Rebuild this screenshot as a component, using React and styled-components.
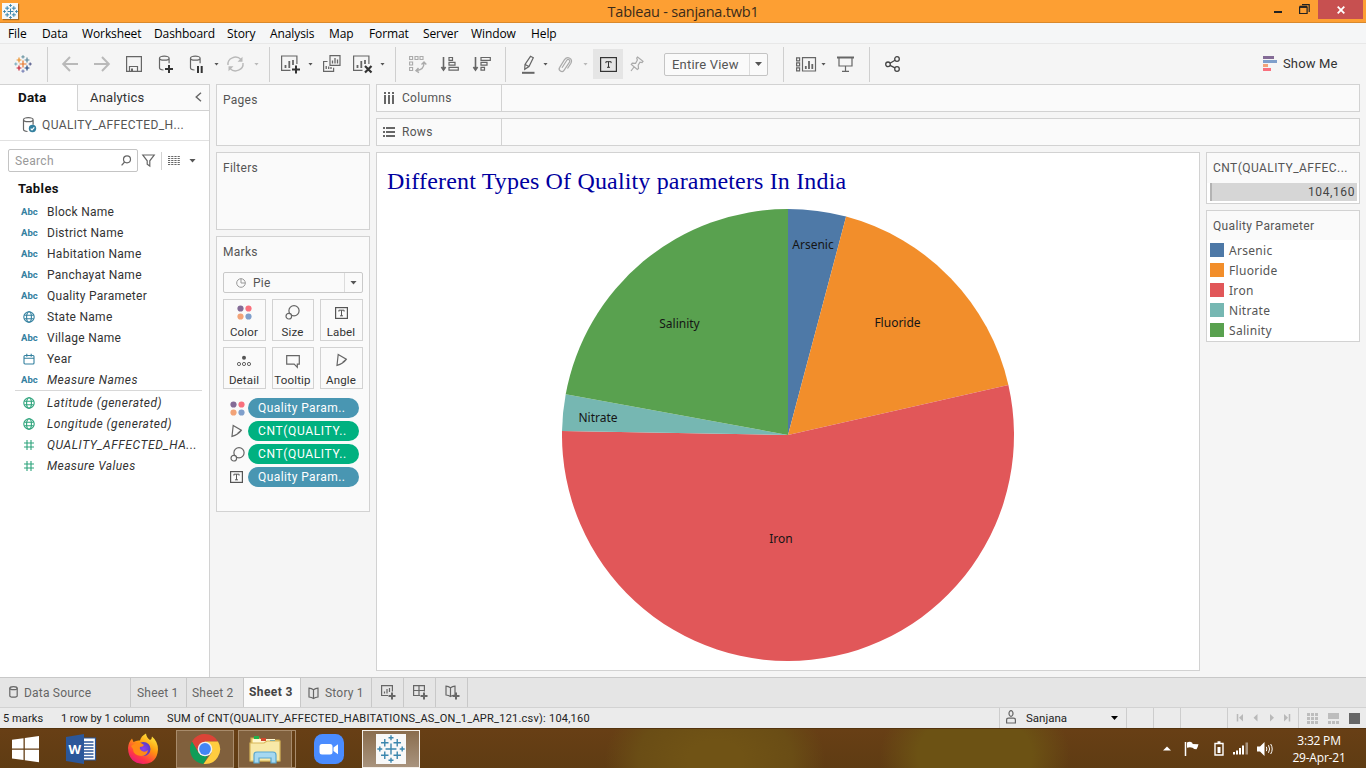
import React from "react";
import styled, { createGlobalStyle, css } from "styled-components";

const GlobalStyle = createGlobalStyle`
  * { box-sizing: border-box; }
  html, body { margin: 0; padding: 0; overflow: hidden; }
  body { font-family: Roboto, "Liberation Sans", sans-serif; font-size: 12px; color: #333; }
`;

const segoe = css`font-family: "Open Sans", "Noto Sans", sans-serif;`;
const LINE = "#d2d2d2";

const Window = styled.div`
  width: 1366px;
  height: 768px;
  display: flex;
  flex-direction: column;
  background: #f5f5f5;
  white-space: nowrap;
`;

const Glyph = styled.svg`
  display: block;
  flex: none;
  margin-left: ${(p) => p.$gap || 0}px;
  margin-top: ${(p) => p.$top || 0}px;
  overflow: visible;
`;

function Icon({ w, h, gap, top, color = "#666", sw = 1.2, children }) {
  return (
    <Glyph width={w} height={h} viewBox={`0 0 ${w} ${h}`} $gap={gap} $top={top}
      fill="none" stroke={color} strokeWidth={sw}>
      {children}
    </Glyph>
  );
}

/* ---------- title bar ---------- */
const TitleBar = styled.header`
  ${segoe}
  height: 23px;
  flex: none;
  display: flex;
  background: #fd9f33;
  border-bottom: 1px solid #d9892d;
  color: #3a2b1a;
`;
const AppBadge = styled.div`
  width: 16px;
  height: 16px;
  margin: 3px 0 0 2px;
  background: #f7f7f7;
  box-shadow: 1px 1px 1px #a86a22;
  display: flex;
  align-items: center;
  justify-content: center;
`;
const WindowTitle = styled.h1`
  flex: 1;
  margin: 0 0 0 88px;
  text-align: center;
  font-weight: 400;
  font-size: 14.5px;
  line-height: 23px;
  letter-spacing: -0.22px;
`;
const WindowButtons = styled.div`
  display: flex;
  width: 103px;
  margin-right: 3px;
`;
const CloseButton = styled.button`
  width: 45px;
  height: 19px;
  margin-left: 8px;
  padding: 0;
  border: 0;
  background: #c75050;
  display: flex;
  align-items: center;
  justify-content: center;
`;

/* ---------- menu ---------- */
const MenuBar = styled.nav`
  ${segoe}
  height: 21px;
  flex: none;
  background: #f5f6f7;
  border-bottom: 1px solid #e8e8e8;
  display: flex;
  padding-left: 8px;
`;
const MenuItem = styled.span`
  width: ${(p) => p.$w}px;
  color: #000;
  font-size: 12px;
  line-height: 21px;
  letter-spacing: -0.1px;
`;

/* ---------- toolbar ---------- */
const Toolbar = styled.div`
  height: 40px;
  flex: none;
  display: flex;
  align-items: center;
`;
const Divider = styled.i`
  width: 1px;
  height: 35px;
  margin-top: 1px;
  margin-left: ${(p) => p.$gap}px;
  background: #cfcfcf;
  flex: none;
`;
const Caret = styled.i`
  width: ${(p) => 2 * (p.$s || 2.5)}px;
  height: ${(p) => (p.$s ? 4 : 3)}px;
  flex: none;
  margin-left: ${(p) => p.$gap || 0}px;
  background: ${(p) => p.$c || "#555"};
  clip-path: polygon(0 0, 100% 0, 50% 100%);
`;
const ActiveTool = styled.div`
  width: 30px;
  height: 30px;
  margin-left: 5px;
  background: #e5e5e5;
  display: flex;
  align-items: center;
  justify-content: center;
`;
const FitSelect = styled.div`
  width: 104px;
  height: 23px;
  margin-left: 20px;
  border: 1px solid #c4c4c4;
  border-radius: 2px;
  background: #fafafa;
  display: flex;
  align-items: stretch;
  font-size: 13px;
  color: #555;
`;
const SelectLabel = styled.span`
  flex: 1;
  padding-left: ${(p) => p.$pad}px;
  line-height: ${(p) => p.$lh}px;
  letter-spacing: ${(p) => p.$ls || 0}px;
`;
const SelectArrow = styled.span`
  width: 18px;
  border-left: 1px solid #dcdcdc;
  display: flex;
  align-items: center;
  justify-content: center;
`;
const ShowMe = styled.div`
  margin-left: auto;
  width: 103px;
  display: flex;
  align-items: center;
  font-size: 13px;
  line-height: 15px;
  padding-bottom: 1px;
  color: #333;
  letter-spacing: 0.15px;
  gap: 6px;
`;

/* ---------- body ---------- */
const Workspace = styled.div`
  flex: 1;
  min-height: 0;
  display: flex;
`;
const Sidebar = styled.aside`
  width: 210px;
  border-right: 1px solid ${LINE};
  background: #fff;
  flex: none;
`;
const PaneTabs = styled.div`
  display: flex;
  height: 27px;
`;
const DataTab = styled.div`
  width: 77px;
  border-top: 1px solid ${LINE};
  padding-left: 18px;
  font-size: 13.5px;
  font-weight: 700;
  line-height: 25px;
  letter-spacing: 0.15px;
  color: #111;
`;
const AnalyticsTab = styled.div`
  flex: 1;
  border: 1px solid ${LINE};
  border-right: 0;
  background: #fafafa;
  padding: 0 7px 0 12px;
  display: flex;
  align-items: center;
  justify-content: space-between;
  font-size: 13px;
  letter-spacing: 0.15px;
`;
const SourceRow = styled.div`
  height: 30px;
  border-bottom: 1px solid #e1e1e1;
  padding-left: 22px;
  padding-bottom: 1px;
  display: flex;
  align-items: center;
  gap: 6px;
  font-size: 12px;
  letter-spacing: 0.38px;
  color: #555;
`;
const SearchRow = styled.div`
  display: flex;
  align-items: center;
  padding: 8px 0 0 8px;
`;
const SearchBox = styled.div`
  width: 130px;
  height: 23px;
  border: 1px solid #c4c4c4;
  border-radius: 2px;
  display: flex;
  align-items: center;
  justify-content: space-between;
  padding: 0 6px 0 6px;
  color: #999;
  letter-spacing: 0.35px;
`;
const ThinRule = styled.i`
  width: 1px;
  height: 18px;
  margin-left: 6px;
  background: #d2d2d2;
`;
const TablesHeading = styled.h2`
  margin: 7px 0 3px 18px;
  font-size: 13px;
  line-height: 19px;
  letter-spacing: 0.4px;
  color: #111;
`;
const Field = styled.div`
  height: 21px;
  display: flex;
  align-items: center;
  font-style: ${(p) => (p.$calc ? "italic" : "normal")};
  color: #333;
  font-size: 12px;
  letter-spacing: ${(p) => p.$ls ?? 0.27}px;
`;
const TypeMark = styled.span`
  width: 47px;
  padding-left: 21px;
  color: #33809f;
  font-size: 9.5px;
  font-style: normal;
  font-weight: 700;
  letter-spacing: 0;
  flex: none;
`;
const IconSlot = styled.span`
  width: 47px;
  padding-left: 23px;
  flex: none;
`;
const FieldRule = styled.div`
  height: 1px;
  margin: 0 7px 1px 15px;
  background: #d8d8d8;
`;

const Shelves = styled.div`
  width: 154px;
  margin-left: 6px;
  display: flex;
  flex-direction: column;
  gap: 6px;
  flex: none;
`;
const Card = styled.section`
  border: 1px solid ${LINE};
  background: ${(p) => p.$bg || "#fafafa"};
  height: ${(p) => p.$h}px;
  flex: none;
`;
const CardTitle = styled.div`
  padding-left: 6px;
  height: ${(p) => p.$h || 30}px;
  line-height: 30px;
  background: #fafafa;
  color: #555;
  font-size: 12px;
  letter-spacing: ${(p) => p.$ls ?? 0.28}px;
`;
const MarkSelect = styled.div`
  margin: 5px 6px 0;
  height: 21px;
  border: 1px solid #c9c9c9;
  border-radius: 2px;
  display: flex;
  color: #555;
`;
const MarkGrid = styled.div`
  display: grid;
  grid-template-columns: 43px 42px 43px;
  grid-auto-rows: 42px;
  gap: 6px;
  margin: 6px 6px 0;
`;
const MarkButton = styled.div`
  border: 1px solid ${LINE};
  display: flex;
  flex-direction: column;
  align-items: center;
  justify-content: space-between;
  padding: 5px 1px 1px 0;
  font-size: 11.5px;
  line-height: 14px;
  letter-spacing: 0.15px;
`;
const PillList = styled.div`
  display: flex;
  flex-direction: column;
  gap: 3px;
  margin: 9px 10px 0 11px;
`;
const PillRow = styled.div`
  display: flex;
  align-items: center;
  justify-content: space-between;
  padding-left: 2px;
`;
const Pill = styled.div`
  width: 111px;
  height: 20px;
  border-radius: 10px;
  padding-left: 10px;
  line-height: 20px;
  color: #fff;
  font-size: 12px;
  letter-spacing: ${(p) => (p.$measure ? 0.65 : 0.42)}px;
  background: ${(p) => (p.$measure ? "#00b180" : "#4996b2")};
`;

const Stage = styled.main`
  margin-left: 6px;
  width: 984px;
  display: flex;
  flex-direction: column;
  gap: 6px;
`;
const Shelf = styled.div`
  height: 28px;
  border: 1px solid ${LINE};
  background: #fafafa;
  display: flex;
`;
const ShelfName = styled.div`
  width: 125px;
  border-right: 1px solid ${LINE};
  display: flex;
  align-items: center;
  padding-left: 6px;
  gap: 7px;
  color: #555;
  letter-spacing: 0.3px;
`;
const ViewRow = styled.div`
  display: flex;
  gap: 6px;
`;
const Sheet = styled.section`
  width: 824px;
  height: 519px;
  border: 1px solid ${LINE};
  background: #fff;
`;
const SheetTitle = styled.h2`
  margin: 0;
  height: 56px;
  padding-left: 10px;
  line-height: 56px;
  font-family: "Liberation Serif", serif;
  font-weight: 400;
  font-size: 24px;
  letter-spacing: 0.16px;
  color: #0000a0;
`;
const PieChart = styled.svg`
  display: block;
  margin: 0 auto;
`;
const SliceLabel = styled.text`
  font-family: "Noto Sans", sans-serif;
  font-size: 12px;
  fill: #151515;
  text-anchor: middle;
`;
const LegendColumn = styled.div`
  width: 154px;
  display: flex;
  flex-direction: column;
  gap: 6px;
`;
const CountBar = styled.div`
  margin: 0 2px 0 3px;
  height: 18px;
  border-left: 2px solid #b3b3b3;
  background: #d6d6d6;
  color: #444;
  padding-right: 2px;
  text-align: right;
  line-height: 19px;
  font-size: 12px;
  letter-spacing: 0.6px;
`;
const LegendItem = styled.div`
  height: 20px;
  padding-left: 3px;
  display: flex;
  align-items: center;
  gap: 5px;
  color: #555;
  font-family: "Noto Sans", sans-serif;
  font-size: 12px;
  letter-spacing: 0.3px;
`;
const Swatch = styled.i`
  width: 14px;
  height: 14px;
  background: ${(p) => p.$c};
`;

/* ---------- bottom bars ---------- */
const TabStrip = styled.div`
  height: 31px;
  flex: none;
  border-top: 1px solid #c8c8c8;
  border-bottom: 1px solid ${LINE};
  background: #e5e5e5;
  display: flex;
`;
const SheetTab = styled.div`
  width: ${(p) => p.$w}px;
  border-right: 1px solid #c8c8c8;
  padding-left: ${(p) => p.$pad ?? 6}px;
  display: flex;
  align-items: center;
  gap: 6px;
  font-size: 12px;
  letter-spacing: 0.2px;
  color: #666;
  ${(p) => p.$on && css`background: #fafafa; font-weight: 700; color: #444; padding-bottom: 2px; letter-spacing: 0.4px;`}
`;
const StatusBar = styled.div`
  height: 20px;
  flex: none;
  display: flex;
  background: #ebebeb;
  font-size: 11px;
  line-height: 21px;
  color: #222;
`;
const StatusText = styled.span`
  width: ${(p) => p.$w}px;
  padding-left: ${(p) => p.$pad || 0}px;
  letter-spacing: ${(p) => p.$ls || 0}px;
`;
const StatusCell = styled.div`
  width: ${(p) => p.$w}px;
  border-left: 1px solid #cdcdcd;
  display: flex;
  align-items: center;
  padding-left: ${(p) => p.$pad || 0}px;
`;
const UserName = styled.span`
  width: 95px;
  padding-left: 10px;
  font-size: 11.5px;
`;

const Taskbar = styled.footer`
  height: 40px;
  flex: none;
  display: flex;
  align-items: center;
  border-top: 1px solid #54340f;
  background:
    radial-gradient(ellipse 95px 70px at 975px 26px, #6c5214 60%, transparent 100%),
    radial-gradient(ellipse 110px 75px at 715px 30px, #705315 25%, #6a4d15 70%, transparent 100%),
    linear-gradient(#683f15, #5f3c13);
`;
const TaskButton = styled.div`
  width: ${(p) => p.$w}px;
  height: ${(p) => (p.$framed || p.$front ? 38 : 30)}px;
  margin-left: ${(p) => p.$gap || 0}px;
  display: flex;
  align-items: center;
  justify-content: center;
  flex: none;
  ${(p) => p.$framed && css`border: 1px solid #a88b6b; background: #80603d;`}
  ${(p) => p.$front && css`border: 1px solid #f4efe9; background: linear-gradient(#8a6d4e, #a8937d);`}
`;
const StackEdge = styled.i`
  width: 4px;
  height: 38px;
  border: 1px solid #a88b6b;
  border-left: 0;
`;
const TableauTile = styled.div`
  width: 30px;
  height: 30px;
  background: #f8f8f8;
  display: flex;
  align-items: center;
  justify-content: center;
`;
const Tray = styled.div`
  margin-left: auto;
  width: 205px;
  display: flex;
  align-items: center;
`;
const Clock = styled.div`
  ${segoe}
  flex: 1;
  margin-left: 15px;
  margin-right: 16px;
  text-align: center;
  color: #fff;
  font-size: 12px;
  line-height: 17px;
  letter-spacing: -0.2px;
`;

/* ---------- drawings ---------- */
const SPARKS = [
  [0, 0, 3.5, "#e8762b"], [-4, -4, 2.4, "#eb912b"], [4, -4, 2.4, "#5b879b"],
  [-4, 4, 2.4, "#c72035"], [4, 4, 2.4, "#1f447e"], [0, -7.2, 1.6, "#7099a6"],
  [0, 7.2, 1.6, "#7b84b8"], [-7.2, 0, 1.6, "#7fb0c0"], [7.2, 0, 1.6, "#59608f"],
];
function Sparks({ size, gap, mono, sw = 1.2 }) {
  return (
    <Glyph width={size} height={size} viewBox="-9 -9 18 18" $gap={gap} fill="none" strokeWidth={sw}>
      {SPARKS.map(([x, y, r, c]) => (
        <path key={`${x},${y}`} stroke={mono || c} d={`M${x - r} ${y}h${2 * r}M${x} ${y - r}v${2 * r}`} />
      ))}
    </Glyph>
  );
}
const Dots = () => (
  <Icon w={15} h={15}>
    <g stroke="none">
      <circle cx="3.5" cy="3.5" r="3.1" fill="#846b96" />
      <circle cx="11.5" cy="3.5" r="3.1" fill="#f9707d" />
      <circle cx="3.5" cy="11.5" r="3.1" fill="#f2a378" />
      <circle cx="11.5" cy="11.5" r="3.1" fill="#7f9fcb" />
    </g>
  </Icon>
);
const SizeIcon = () => (
  <Icon w={15} h={15}><circle cx="9" cy="5.8" r="5.1" /><circle cx="3.8" cy="11.2" r="2.8" fill="#fafafa" /></Icon>
);
const LabelIcon = ({ w = 13, h = 12, top = 0, color = "#555" }) => (
  <Icon w={w} h={h} color={color} top={top}>
    <rect x=".6" y=".6" width={w - 1.2} height={h - 1.2} />
    <path d={`M${w / 2 - 2.6} ${h / 2 - 1.4}v-1.4h5.2v1.4M${w / 2} ${h / 2 - 2.800}v5.600M${w / 2 - 1.5} ${h / 2 + 2.800}h3`} strokeWidth="1" />
  </Icon>
);
const AngleIcon = () => (
  <Icon w={13} h={14}><path d="M3.2 1.5L11.3 6.3Q8.2 10.5 2 12.3ZM7.6 9.4L11.3 6.3" /></Icon>
);
const Globe = ({ c }) => (
  <Icon w={12} h={12} color={c} sw={1.1}>
    <circle cx="6" cy="6" r="5.2" /><ellipse cx="6" cy="6" rx="2.4" ry="5.2" /><path d="M1.3 4.2h9.4M1.3 7.8h9.4" />
  </Icon>
);
const Hash = () => (
  <Icon w={12} h={12} color="#2da37b" sw={1.1}><path d="M4 1v10M8 1v10M1 4h10M1 8h10" /></Icon>
);
const Calendar = () => (
  <Icon w={12} h={12} color="#33809f" sw={1.1}><rect x="1" y="2.5" width="10" height="8.5" rx="1" /><path d="M1 5.2h10M3.8.8v3M8.2.8v3" /></Icon>
);
const Cylinder = "M1.5 3.2v9.6q0 2 4 2.2M1.5 3.2a4.8 2 0 1 0 9.6 0a4.8 2 0 1 0-9.6 0M11.1 3.2v5";

const FIELDS = [
  ["abc", "Block Name"], ["abc", "District Name"], ["abc", "Habitation Name"],
  ["abc", "Panchayat Name"], ["abc", "Quality Parameter"], ["geo", "State Name"],
  ["abc", "Village Name"], ["date", "Year"], ["abc", "Measure Names", 0.45],
];
const MEASURES = [
  ["geo", "Latitude (generated)", 0.5], ["geo", "Longitude (generated)", 0.5],
  ["num", "QUALITY_AFFECTED_HA...", 0.57], ["num", "Measure Values", 0.4],
];
function FieldType({ kind, green }) {
  const c = green ? "#2da37b" : "#33809f";
  if (kind === "abc") return <TypeMark>Abc</TypeMark>;
  return (
    <IconSlot>
      {kind === "geo" ? <Globe c={c} /> : kind === "date" ? <Calendar /> : <Hash />}
    </IconSlot>
  );
}

const SLICES = [
  { name: "Arsenic", to: 14.9, color: "#4e79a7", x: 251, y: 40 },
  { name: "Fluoride", to: 77.2, color: "#f28e2b", x: 335.5, y: 118 },
  { name: "Iron", to: 271, color: "#e15759", x: 219, y: 334 },
  { name: "Nitrate", to: 280.4, color: "#76b7b2", x: 36, y: 213 },
  { name: "Salinity", to: 360, color: "#59a14f", x: 117.5, y: 119 },
];
const R = 226;
const edge = (deg) => {
  const a = (deg * Math.PI) / 180;
  return `${(R + R * Math.sin(a)).toFixed(2)} ${(R - R * Math.cos(a)).toFixed(2)}`;
};
function Pie() {
  return (
    <PieChart width={2 * R} height={2 * R}>
      {SLICES.map((s, i) => {
        const from = i ? SLICES[i - 1].to : 0;
        return (
          <path key={s.name} fill={s.color}
            d={`M${R} ${R}L${edge(from)}A${R} ${R} 0 ${s.to - from > 180 ? 1 : 0} 1 ${edge(s.to)}Z`} />
        );
      })}
      {SLICES.map((s) => <SliceLabel key={s.name} x={s.x} y={s.y}>{s.name}</SliceLabel>)}
    </PieChart>
  );
}

const MENUS = [["File", 34], ["Data", 40], ["Worksheet", 72], ["Dashboard", 73], ["Story", 43],
  ["Analysis", 59], ["Map", 40], ["Format", 54], ["Server", 48], ["Window", 60], ["Help", 40]];

const Plus = ({ x, y, s = 4 }) => <path stroke="#333" strokeWidth="2" d={`M${x - s} ${y}h${2 * s}M${x} ${y - s}v${2 * s}`} />;

function ToolbarRow() {
  const off = "#b9b9b9";
  return (
    <Toolbar>
      <Sparks size={18} gap={14} />
      <Divider $gap={15} />
      <Icon w={16} h={16} gap={14} color={off} sw={2}><path d="M16 8H1.5M8 1L1.2 8L8 15" /></Icon>
      <Icon w={16} h={16} gap={16} color={off} sw={2}><path d="M0 8h14.5M8 1l6.8 7L8 15" /></Icon>
      <Icon w={16} h={16} gap={16}><path d="M.6.6h14.8v14.8H.6zM3.5 15v-4.5h8V15" /><path d="M6 12.5V15" strokeWidth="2" /></Icon>
      <Icon w={16} h={18} gap={16}><path d={Cylinder} /><Plus x={11} y={14} /></Icon>
      <Icon w={16} h={18} gap={15}><path d={Cylinder} /><path d="M9 11v7M12.7 11v7" stroke="#333" strokeWidth="2" /></Icon>
      <Caret $gap={9} />
      <Icon w={17} h={16} gap={8} color={off} sw={1.4}>
        <path d="M1 9a7.5 7 0 0 1 13-5.5M16 7a7.5 7 0 0 1-13 5.5" />
        <path d="M15.5.8v5h-5zM1.5 15.2v-5h5z" fill={off} stroke="none" />
      </Icon>
      <Caret $gap={10} $c={off} />
      <Divider $gap={10} />
      <Icon w={20} h={18} gap={11}>
        <path d="M9.5 15.4H.6V1h15.3v8" /><path d="M4.5 13v-3M8.3 13V6M12 10V5" strokeWidth="1.8" /><Plus x={15} y={14.5} />
      </Icon>
      <Caret $gap={7} />
      <Icon w={18} h={18} gap={10}>
        <path d="M7 .6h10v9.8H7zM4.5 6.5H.6v9.8h10v-3.5" /><path d="M9.5 8.5v-3M12 8.5V3M14.5 8.5v-4M3.2 14v-3M5.7 14v-2.5M8 14v-2" strokeWidth="1.3" />
      </Icon>
      <Icon w={20} h={18} gap={12}>
        <path d="M9.5 15.4H.6V1h15.3v8" /><path d="M4.5 13v-3M8.3 13V6M12 9V5" strokeWidth="1.8" />
        <path d="M12 11l6.5 6.5M18.5 11L12 17.5" stroke="#333" strokeWidth="2.2" />
      </Icon>
      <Caret $gap={7} />
      <Divider $gap={10} />
      <Icon w={18} h={18} gap={13} color="#aaa" sw={1.1}>
        <path d="M.6 1.5h3v3h-3zM6 1.5h3v3H6zM11 1.5h3v3h-3zM.6 7h3v3h-3zM.6 12.5h3v3h-3z" />
        <path d="M15 8q0 6.5-7 7.5M12.5 9.5L15 7l2.3 2.5M9.5 13L7 15.7l3 2" strokeWidth="1.4" />
      </Icon>
      <Icon w={18} h={16} gap={14}>
        <path d="M2.5 1v13M.4 11l2.1 3 2.1-3" strokeWidth="1.6" /><path d="M8 1.5h3.5v2.8H8zM8 6.3h6v2.8H8zM8 11.3h9.3v2.8H8z" />
      </Icon>
      <Icon w={18} h={16} gap={14}>
        <path d="M2.5 1v13M.4 11l2.1 3 2.1-3" strokeWidth="1.6" /><path d="M8 1.5h9.3v2.8H8zM8 6.3h6v2.8H8zM8 11.3h3.5v2.8H8z" />
      </Icon>
      <Divider $gap={14} />
      <Icon w={14} h={19} gap={15}>
        <path d="M9.5 1.3l2.8 1.4L8 11.5l-4.3 2.8.3-4.8zM4.2 9.5l3.6 2" /><path d="M1 17.8h12.5" strokeWidth="2" />
      </Icon>
      <Caret $gap={8} />
      <Icon w={14} h={16} gap={10} color="#aaa">
        <path d="M4 10.8l4.8-7.5a1.6 1.6 0 0 1 2.7 1.8L6 13.3a2.6 2.6 0 0 1-4.3-3L6.5 2.7Q8.8-.4 11.7 1.2t1.2 5L9.5 11.5" transform="translate(0 1)" />
      </Icon>
      <Caret $gap={11} $c={off} />
      <ActiveTool><LabelIcon w={17} h={15} color="#333" /></ActiveTool>
      <Icon w={14} h={16} gap={7} color="#aaa"><path d="M7.5 1l5.5 4.3-1 1.2-2-.3-1.8 3 .3 3.2-1.2 1-6-5 1-1.2 3.3.2L7.4 4 6.7 2zM4 11l-3 4" /></Icon>
      <FitSelect>
        <SelectLabel $pad={7} $lh={21} $ls={0.2}>Entire View</SelectLabel>
        <SelectArrow><Caret $s={3.5} /></SelectArrow>
      </FitSelect>
      <Divider $gap={15} />
      <Icon w={20} h={15} gap={12}>
        <path d="M.6.8h3v3h-3zM.6 5.8h3v3h-3zM.6 10.8h3v3h-3zM6.5.6h13v13.4h-13z" /><path d="M9.8 12v-3M13 12V4M16.3 12V7" strokeWidth="1.8" />
      </Icon>
      <Caret $gap={5} />
      <Icon w={17} h={16} gap={11}><path d="M0 1.5h17" strokeWidth="2" /><path d="M2 2v8h13V2M8.5 10v5M5 15.4h7" /></Icon>
      <Divider $gap={15} />
      <Icon w={15} h={16} gap={15} color="#444" sw={1.3}><circle cx="3" cy="8.3" r="2.3" /><circle cx="12" cy="3" r="2.3" /><circle cx="12" cy="13" r="2.3" /><path d="M5 7.2l5-3M5 9.4l5 2.5" /></Icon>
      <ShowMe>
        <Icon w={14} h={15}>
          <g stroke="none"><path fill="#846b96" d="M0 0h11v3H0z" /><path fill="#7f9fcb" d="M0 4h14v3H0z" /><path fill="#f2a378" d="M0 8h5v3H0z" /><path fill="#f9707d" d="M0 12h8v3H0z" /></g>
        </Icon>
        Show Me
      </ShowMe>
    </Toolbar>
  );
}

function DataPane() {
  return (
    <Sidebar>
      <PaneTabs>
        <DataTab>Data</DataTab>
        <AnalyticsTab>Analytics<Icon w={7} h={10} top={-2} sw={1.4}><path d="M6 .8L1.2 5 6 9.2" /></Icon></AnalyticsTab>
      </PaneTabs>
      <SourceRow>
        <Icon w={14} h={16}>
          <path d={Cylinder} transform="translate(0 -.5)" />
          <circle cx="10.5" cy="11.5" r="3.7" fill="#33809f" stroke="none" /><path d="M8.7 11.6l1.3 1.3 2.3-2.6" stroke="#fff" />
        </Icon>
        QUALITY_AFFECTED_H...
      </SourceRow>
      <SearchRow>
        <SearchBox>Search<Icon w={10} h={11}><circle cx="6" cy="4.3" r="3.5" /><path d="M3.6 7L.6 10.3" /></Icon></SearchBox>
        <Icon w={13} h={13} gap={4}><path d="M.8 1h11.4L7.8 6.8V12l-2.6-1.8V6.8z" /></Icon>
        <ThinRule />
        <Icon w={12} h={9} gap={6} sw={1}><path d="M0 .5h12M0 2.5h12M0 4.5h12M0 6.500h12M0 8.500h12" strokeDasharray="2.200 1" /></Icon>
        <Caret $gap={9} $s={3.5} />
      </SearchRow>
      <TablesHeading>Tables</TablesHeading>
      {FIELDS.map(([k, n, ls]) => <Field key={n} $calc={!!ls} $ls={ls}><FieldType kind={k} />{n}</Field>)}
      <FieldRule />
      {MEASURES.map(([k, n, ls]) => <Field key={n} $calc $ls={ls}><FieldType kind={k} green />{n}</Field>)}
    </Sidebar>
  );
}

function MarksCard() {
  return (
    <Card $h={276}>
      <CardTitle>Marks</CardTitle>
      <MarkSelect>
        <Icon w={10} h={10} gap={12} top={5} color="#999" sw={1}><circle cx="5" cy="5" r="4.3" /><path d="M5 .7V5h4.3" /></Icon>
        <SelectLabel $pad={7} $lh={20} $ls={0.2}>Pie</SelectLabel>
        <SelectArrow><Caret $s={3.5} /></SelectArrow>
      </MarkSelect>
      <MarkGrid>
        <MarkButton><Dots />Color</MarkButton>
        <MarkButton><SizeIcon />Size</MarkButton>
        <MarkButton><LabelIcon top={2} />Label</MarkButton>
        <MarkButton>
          <Icon w={14} h={12} top={3} sw={1}><circle cx="7" cy="1.8" r="2" fill="#555" stroke="none" /><circle cx="2" cy="8" r="1.6" /><circle cx="7" cy="8" r="1.6" /><circle cx="12" cy="8" r="1.6" /></Icon>
          Detail
        </MarkButton>
        <MarkButton><Icon w={14} h={13} top={2}><path d="M.7.7h12.6v8.4h-2v3.2L8.2 9.1H.7z" /></Icon>Tooltip</MarkButton>
        <MarkButton><AngleIcon />Angle</MarkButton>
      </MarkGrid>
      <PillList>
        <PillRow><Dots /><Pill>Quality Param..</Pill></PillRow>
        <PillRow><AngleIcon /><Pill $measure>CNT(QUALITY..</Pill></PillRow>
        <PillRow><SizeIcon /><Pill $measure>CNT(QUALITY..</Pill></PillRow>
        <PillRow><LabelIcon /><Pill>Quality Param..</Pill></PillRow>
      </PillList>
    </Card>
  );
}

function TabBar() {
  const book = "M1 1.2q2.5.3 4.5 1.6Q7.5 1.5 10 1.2v8.8q-2.5.3-4.5 1.6Q3.5 10.3 1 10zM5.5 2.8v8.5";
  return (
    <TabStrip>
      <SheetTab $w={131} $pad={9}><Icon w={9} h={12} top={-2}><ellipse cx="4.5" cy="2.2" rx="3.7" ry="1.5" /><path d="M.8 2.2v7.5q0 1.5 3.7 1.5t3.7-1.5V2.2" /></Icon>Data Source</SheetTab>
      <SheetTab $w={56}>Sheet 1</SheetTab>
      <SheetTab $w={57} $pad={5}>Sheet 2</SheetTab>
      <SheetTab $w={57} $pad={5} $on>Sheet 3</SheetTab>
      <SheetTab $w={71} $pad={7}><Icon w={11} h={12}><path d={book} /></Icon>Story 1</SheetTab>
      <SheetTab $w={32} $pad={9}>
        <Icon w={15} h={15}><path d="M7 10.5H.6V.6h10.8V6.5" /><path d="M3.5 8.5V6.5M6 8.5V4M8.5 7V3" /><path d="M7.5 11h7M11 7.5v7" strokeWidth="2" /></Icon>
      </SheetTab>
      <SheetTab $w={32} $pad={9}>
        <Icon w={15} h={15}><path d="M7 10.5H.6V.6h10.8V6.5M.6 5.5h10.8M6 .6v10" /><path d="M7.5 11h7M11 7.5v7" strokeWidth="2" /></Icon>
      </SheetTab>
      <SheetTab $w={32} $pad={9}>
        <Icon w={15} h={15}><path d={book} /><path d="M7.5 11h7M11 7.5v7" strokeWidth="2" /></Icon>
      </SheetTab>
    </TabStrip>
  );
}

function Status() {
  return (
    <StatusBar>
      <StatusText $w={58} $pad={3} $ls={0.1}>5 marks</StatusText>
      <StatusText $w={109} $pad={3} $ls={-0.05}>1 row by 1 column</StatusText>
      <StatusText $w={832} $ls={0.23}>SUM of CNT(QUALITY_AFFECTED_HABITATIONS_AS_ON_1_APR_121.csv): 104,160</StatusText>
      <StatusCell $w={127} $pad={6}>
        <Icon w={10} h={14} top={-3}><ellipse cx="5" cy="3.5" rx="2" ry="2.8" /><path d="M.6 13v-3q0-1.8 2-1.8h4.8q2 0 2 1.8v3z" /></Icon>
        <UserName>Sanjana</UserName>
        <Caret $s={3.5} $c="#000" />
      </StatusCell>
      <StatusCell $w={27} />
      <StatusCell $w={27} />
      <StatusCell $w={47} />
      <StatusCell $w={71} $pad={8}>
        <Icon w={56} h={8} color="#b9b9b9" sw={1.5}>
          <path d="M1.5 0v7.5M53.5 0v7.5" />
          <path stroke="none" fill="#b9b9b9" d="M7 0v7.5L3 3.75zM21.5 0v7.5l-4-3.75zM34 0v7.5l4-3.75zM48 0v7.5l4-3.75z" />
        </Icon>
      </StatusCell>
      <StatusCell $w={68} $pad={8}>
        <Icon w={53} h={11}>
          <g stroke="none" fill="#bdbdbd">
            {[0, 4, 8].map((y) => [0, 4, 8].map((x) => <rect key={`${x}-${y}`} x={x} y={y} width="3" height="3" />))}
            <path d="M21 0h11v6H21zM21 8h3v3h-3zM25 8h3v3h-3zM29 8h3v3h-3z" />
            <path fill="#666" d="M42 0h11v11H42z" />
          </g>
        </Icon>
      </StatusCell>
    </StatusBar>
  );
}

const WordLetter = styled.text`
  font: 700 13px "Open Sans", sans-serif;
  fill: #fff;
`;

function WindowsBar() {
  return (
    <Taskbar>
      <TaskButton $w={27} $gap={12}>
        <Icon w={27} h={26}><path stroke="none" fill="#fff" d="M0 3.8l11.5-1.6v10.3H0zM12.8 2L27 0v12.5H12.8zM0 13.8h11.5v10.3L0 22.5zM12.8 13.8H27v12.4l-14.2-2z" /></Icon>
      </TaskButton>
      <TaskButton $w={30} $gap={27}>
        <Icon w={30} h={30}>
          <path fill="#fff" stroke="#2b579a" d="M17 4h12.5v22H17z" /><path stroke="#2b579a" strokeWidth="1.5" d="M18 8h9.5M18 11h9.5M18 14h9.5M18 17h9.5M18 20h9.5M18 23h9.5" />
          <path stroke="none" fill="#2b579a" d="M0 3l18-3v30L0 27z" /><WordLetter x="2.5" y="19.5" stroke="none">W</WordLetter>
        </Icon>
      </TaskButton>
      <TaskButton $w={30} $gap={32}>
        <Icon w={30} h={30}>
          <defs>
            <linearGradient id="fox" x1="0.8" y1="0" x2="0.2" y2="1"><stop offset="0" stopColor="#fff044" /><stop offset=".4" stopColor="#ff980e" /><stop offset=".75" stopColor="#ff3647" /><stop offset="1" stopColor="#e31587" /></linearGradient>
            <radialGradient id="globe"><stop offset="0" stopColor="#8b3ff0" /><stop offset="1" stopColor="#5b3cc4" /></radialGradient>
          </defs>
          <path stroke="none" fill="url(#fox)" d="M0 14Q.5 8 4 4.500l1.500 3.500q3-2 6.500-1.500 1-4.500 6-7 .5 4 4 6.500 2-1 2-3.500 6 5 6 13Q29 30 15 30 .5 29 0 14z" />
          <circle cx="15.500" cy="15" r="7" fill="url(#globe)" stroke="none" />
          <path stroke="none" fill="#ff8a16" d="M3 12q5-4 10-3l3 2q-1 2-4 2-1 2 2 4 3 2 6-1-1 6-7 6-8-1-8-7z" />
        </Icon>
      </TaskButton>
      <TaskButton $w={58} $gap={18} $framed>
        <Icon w={30} h={30}>
          <g stroke="none">
            <path fill="#db4437" d="M2 7.5A15 15 0 0 1 28 7.5H15z" />
            <path fill="#db4437" d="M15 15L8.5 18.75 2 7.5Q8 0 15 0z" />
            <path fill="#0f9d58" d="M2 7.5L8.5 18.75Q12 23 18 21.5L13.5 30A15 15 0 0 1 2 7.5z" />
            <path fill="#ffcd40" d="M15 7.5h13A15 15 0 0 1 13.5 30l8-11.25z" />
            <circle cx="15" cy="15" r="7.3" fill="#f1f1f1" /><circle cx="15" cy="15" r="5.9" fill="#4285f4" />
          </g>
        </Icon>
      </TaskButton>
      <TaskButton $w={54} $gap={4} $framed>
        <Icon w={32} h={30}>
          <path stroke="#c9a649" fill="#f3dc84" d="M2 4h8l2 2h18v21H2z" />
          <path stroke="none" fill="#fff7d0" d="M4 5h22v5H4z" />
          <path stroke="none" fill="#22b14c" d="M5 2h5v3H5z" /><path stroke="none" fill="#d3482c" d="M12 4h5v3h-5z" /><path stroke="none" fill="#2aa0e8" d="M21 6h5v3h-5z" />
          <path stroke="#d8b85a" fill="#f8e9a8" d="M1 9h14l3-2h13v20H1z" />
          <path stroke="#5ba7cf" fill="#a5d8f0" d="M5 29v-8q0-3 3-3h16q3 0 3 3v8h-5v-5H10v5z" />
        </Icon>
      </TaskButton>
      <StackEdge />
      <TaskButton $w={30} $gap={18}>
        <Icon w={30} h={30}>
          <g stroke="none"><rect width="30" height="30" rx="8.5" fill="#4a8cff" /><rect x="5.5" y="10" width="13" height="10.5" rx="2.5" fill="#fff" /><path fill="#fff" d="M19.5 13.5l4.5-3.2v9.900l-4.500-3.200z" /></g>
        </Icon>
      </TaskButton>
      <TaskButton $w={58} $gap={18} $front>
        <TableauTile><Sparks size={28} mono="#3b86ad" sw={0.9} /></TableauTile>
      </TaskButton>
      <Tray>
        <Icon w={8} h={5} gap={2}><path stroke="none" fill="#fff" d="M0 4.5L4 .5l4 4z" /></Icon>
        <Icon w={15} h={15} gap={13}><path d="M1.5 1v14" stroke="#fff" strokeWidth="1.5" /><path stroke="none" fill="#fff" d="M3 1.5q3-1.500 5.500.500v1l6 .300q-.500 2.500-2 5-2.500 0-4-1.500-2.500-1-5.500 0z" /></Icon>
        <Icon w={10} h={15} gap={15} color="#fff" sw={1.4}><path d="M1 2.500h8v11.500H1zM3.500 1h3" /><path d="M3.500 6h3v6h-3z" fill="#fff" stroke="none" /></Icon>
        <Icon w={15} h={13} gap={9}>
          <g stroke="none" fill="#fff"><path d="M0 10h2v2.5H0zM3 8.5h2v4H3zM6 6h2v6.5H6zM9 3.5h2v9H9z" /><path fill="#a8937d" d="M12.500 .5h2.500v12h-2.500z" /></g>
        </Icon>
        <Icon w={16} h={14} gap={9} color="#fff"><path fill="#fff" stroke="none" d="M0 4.5h3L7.500 0v14L3 9.5H0z" /><path d="M9.300 4.800q1.200 2.200 0 4.400M11.500 3.200q2.200 3.800 0 7.600M13.700 2q3 5 0 10" strokeWidth="1" /></Icon>
        <Clock>3:32 PM<br />29-Apr-21</Clock>
      </Tray>
    </Taskbar>
  );
}

export default function App() {
  return (
    <Window>
      <GlobalStyle />
      <TitleBar>
        <AppBadge><Sparks size={15} mono="#3b86ad" /></AppBadge>
        <WindowTitle>Tableau - sanjana.twb1</WindowTitle>
        <WindowButtons>
          <Icon w={8} h={3} gap={14} top={11}><path d="M0 1h8" stroke="#222" strokeWidth="2" /></Icon>
          <Icon w={11} h={11} gap={17} top={4} color="#222"><path d="M.6 3.2h7.5v6.3H.6z" /><path d="M.6 2.7h7.500" strokeWidth="2" /><path d="M3 .6h7.200v7.500" /></Icon>
          <CloseButton><Icon w={8} h={8} color="#fff" sw={1.8}><path d="M.7.7l6.600 6.600M7.300.7L.7 7.300" /></Icon></CloseButton>
        </WindowButtons>
      </TitleBar>
      <MenuBar>{MENUS.map(([m, w]) => <MenuItem key={m} $w={w}>{m}</MenuItem>)}</MenuBar>
      <ToolbarRow />
      <Workspace>
        <DataPane />
        <Shelves>
          <Card $h={62}><CardTitle>Pages</CardTitle></Card>
          <Card $h={78}><CardTitle>Filters</CardTitle></Card>
          <MarksCard />
        </Shelves>
        <Stage>
          <Shelf>
            <ShelfName><Icon w={12} h={12} sw={2}><path d="M2 0v2M2 3v9M6 0v2M6 3v9M10 0v2M10 3v9" /></Icon>Columns</ShelfName>
          </Shelf>
          <Shelf>
            <ShelfName><Icon w={12} h={12} sw={2}><path d="M0 2h2M3 2h9M0 6h2M3 6h9M0 10h2M3 10h9" /></Icon>Rows</ShelfName>
          </Shelf>
          <ViewRow>
            <Sheet>
              <SheetTitle>Different Types Of Quality parameters In India</SheetTitle>
              <Pie />
            </Sheet>
            <LegendColumn>
              <Card $h={52} $bg="#fff">
                <CardTitle $ls={0.45}>CNT(QUALITY_AFFEC...</CardTitle>
                <CountBar>104,160</CountBar>
              </Card>
              <Card $h={132} $bg="#fff">
                <CardTitle $h={29} $ls={0.35}>Quality Parameter</CardTitle>
                {SLICES.map((s) => <LegendItem key={s.name}><Swatch $c={s.color} />{s.name}</LegendItem>)}
              </Card>
            </LegendColumn>
          </ViewRow>
        </Stage>
      </Workspace>
      <TabBar />
      <Status />
      <WindowsBar />
    </Window>
  );
}
